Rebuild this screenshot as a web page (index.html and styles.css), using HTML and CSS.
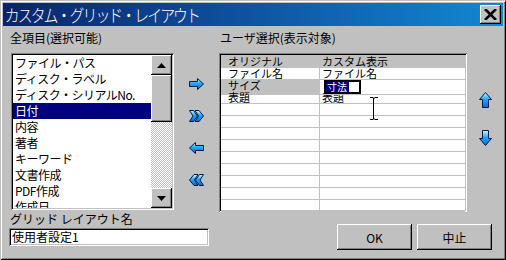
FILE: index.html
```html
<!DOCTYPE html>
<html>
<head>
<meta charset="utf-8">
<title>カスタム・グリッド・レイアウト</title>
<link rel="stylesheet" href="styles.css">
</head>
<body>
<div class="dialog">
  <div class="titlebar">
    <span class="title">カスタム・グリッド・レイアウト</span>
    <span class="close">
      <svg width="13" height="11" viewBox="0 0 13 11"><path d="M1 0 L12 11 M12 0 L1 11" stroke="#000" stroke-width="2.6"/></svg>
    </span>
  </div>

  <div class="body">
    <div class="left">
      <div class="label">全項目(選択可能)</div>
      <div class="pick">
        <div class="listbox">
          <ul class="items">
            <li>ファイル・パス</li>
            <li>ディスク・ラベル</li>
            <li>ディスク・シリアルNo.</li>
            <li class="selected">日付</li>
            <li>内容</li>
            <li>著者</li>
            <li>キーワード</li>
            <li>文書作成</li>
            <li>PDF作成</li>
            <li>作成日</li>
          </ul>
          <div class="scrollbar">
            <div class="sb-btn"><svg width="9" height="5" viewBox="0 0 9 5"><path d="M4.5 0 L9 5 H0 Z" fill="#000"/></svg></div>
            <div class="thumb"></div>
            <div class="track"></div>
            <div class="sb-btn"><svg width="9" height="5" viewBox="0 0 9 5"><path d="M0 0 H9 L4.5 5 Z" fill="#000"/></svg></div>
          </div>
        </div>
        <div class="movers">
          <svg class="arrow" width="15" height="12" viewBox="0 0 15 12"><defs><linearGradient id="ga" x1="0" y1="0" x2="0" y2="1"><stop offset="0" stop-color="#c8ffff"/><stop offset="0.45" stop-color="#22a6f6"/><stop offset="1" stop-color="#0a6ad0"/></linearGradient></defs><path d="M0.5 3.5 H8.5 V0.5 L14.5 6 L8.5 11.5 V8.5 H0.5 Z" fill="url(#ga)" stroke="#001a50"/></svg>
          <svg class="arrow" width="15" height="12" viewBox="0 0 15 12"><path d="M0.5 0.5 H4.5 L8.5 6 L4.5 11.5 H0.5 L4 6 Z M6 0.5 H10 L14.5 6 L10 11.5 H6 L9.5 6 Z" fill="url(#ga)" stroke="#001a50"/></svg>
          <svg class="arrow" width="15" height="12" viewBox="0 0 15 12"><path d="M14.5 3.5 H6.5 V0.5 L0.5 6 L6.5 11.5 V8.5 H14.5 Z" fill="url(#ga)" stroke="#001a50"/></svg>
          <svg class="arrow" width="15" height="12" viewBox="0 0 15 12"><path d="M14.5 0.5 H10.5 L6.5 6 L10.5 11.5 H14.5 L11 6 Z M9 0.5 H5 L0.5 6 L5 11.5 H9 L5.5 6 Z" fill="url(#ga)" stroke="#001a50"/></svg>
        </div>
      </div>
      <div class="label name-label">グリッド レイアウト名</div>
      <div class="field">使用者設定1</div>
    </div>

    <div class="right">
      <div class="label">ユーザ選択(表示対象)</div>
      <div class="pick">
        <div class="grid">
          <div class="row head"><div class="cell">オリジナル</div><div class="cell">カスタム表示</div></div>
          <div class="row"><div class="cell">ファイル名</div><div class="cell">ファイル名</div></div>
          <div class="row"><div class="cell current">サイズ</div><div class="cell editing"><span class="editor"><span class="sel">寸法</span></span></div></div>
          <div class="row"><div class="cell">表題</div><div class="cell">表題</div></div>
          <div class="row"><div class="cell"></div><div class="cell"></div></div>
          <div class="row"><div class="cell"></div><div class="cell"></div></div>
          <div class="row"><div class="cell"></div><div class="cell"></div></div>
          <div class="row"><div class="cell"></div><div class="cell"></div></div>
          <div class="row"><div class="cell"></div><div class="cell"></div></div>
          <div class="row"><div class="cell"></div><div class="cell"></div></div>
          <div class="row"><div class="cell"></div><div class="cell"></div></div>
          <div class="row"><div class="cell"></div><div class="cell"></div></div>
          <div class="row"><div class="cell"></div><div class="cell"></div></div>
          <svg class="ibeam" width="8" height="23" viewBox="0 0 8 23"><path d="M0 0.5 H3 M5 0.5 H8 M3.5 1 V22 M0 22.5 H3 M5 22.5 H8 M3 1 H5 M3 22 H5" stroke="#000" stroke-width="1"/></svg>
        </div>
        <div class="order">
          <svg class="arrow-v" width="13" height="16" viewBox="0 0 13 16"><path d="M6.5 0.5 L12.5 7.5 H9.5 V15.5 H3.5 V7.5 H0.5 Z" fill="url(#ga)" stroke="#001a50"/></svg>
          <svg class="arrow-v" width="13" height="16" viewBox="0 0 13 16"><path d="M6.5 15.5 L12.5 8.5 H9.5 V0.5 H3.5 V8.5 H0.5 Z" fill="url(#ga)" stroke="#001a50"/></svg>
        </div>
      </div>
      <div class="actions">
        <button class="btn">OK</button>
        <button class="btn">中止</button>
      </div>
    </div>
  </div>
</div>
</body>
</html>
```

FILE: styles.css
```css
body{margin:0; background:#c0c0c0; font-family:"Noto Sans CJK JP","Liberation Sans",sans-serif; font-size:12px; color:#000;}

.dialog{width:506px; height:260px; box-sizing:border-box; padding:3px; background:#c0c0c0;
  box-shadow:inset 1px 1px #c0c0c0, inset -1px -1px #000, inset 2px 2px #fff, inset -2px -2px #808080;}

.titlebar{height:23px; display:flex; align-items:center; justify-content:space-between;
  background:linear-gradient(to right,#0a246a 0%,#0e4f9c 45%,#1288d4 100%);}
.title{color:#fff; font-size:17px; letter-spacing:-2.2px; padding-left:2px; line-height:23px; font-weight:300;
  display:inline-block; transform:scaleX(0.875); transform-origin:left center;}
.close{width:21px; height:19px; margin-right:2px; box-sizing:border-box; background:#c0c0c0;
  display:flex; align-items:center; justify-content:center;
  box-shadow:inset -1px -1px #000, inset 1px 1px #fff, inset -2px -2px #808080;}

.body{display:flex; padding:5px 0 0 6px;}
.label{line-height:14px; height:14px; padding-left:1px; margin-bottom:8px; white-space:nowrap;}

/* left side */
.left{width:200px;}
.pick{display:flex;}
.listbox{width:163px; height:157px; margin-left:2px; box-sizing:border-box; padding:2px; background:#fff; display:flex;
  box-shadow:inset 1px 1px #808080, inset -1px -1px #fff, inset 2px 2px #000, inset -2px -2px #c0c0c0;}
.items{list-style:none; margin:0; padding:0; flex:1; overflow:hidden;}
.items li{height:16px; line-height:16px; padding-left:2px; white-space:nowrap; letter-spacing:-0.5px;}
.items li.selected{background:#000080; color:#fff;}
.scrollbar{width:21px; display:flex; flex-direction:column;}
.sb-btn,.thumb{background:#c0c0c0; box-sizing:border-box;
  box-shadow:inset -1px -1px #000, inset 1px 1px #fff, inset -2px -2px #808080;}
.sb-btn{height:20px; display:flex; align-items:center; justify-content:center;}
.thumb{height:47px;}
.track{flex:1; background:conic-gradient(#fff 25%,#c0c0c0 0 50%,#fff 0 75%,#c0c0c0 0) 0 0/2px 2px;}

.movers{display:flex; flex-direction:column; gap:20px; padding:25px 0 0 15px;}
.arrow{display:block;}

.name-label{margin:2px 0 2px;}
.field{width:200px; height:18px; box-sizing:border-box; padding:2px 0 0 3px; line-height:14px; background:#fff;
  box-shadow:inset 1px 1px #808080, inset -1px -1px #fff, inset 2px 2px #000, inset -2px -2px #c0c0c0;}

/* right side */
.right{margin-left:10px; width:273px;}
.grid{position:relative; width:248px; height:159px; box-sizing:border-box; padding:2px; background:#fff; overflow:hidden;
  box-shadow:inset 1px 1px #808080, inset -1px -1px #fff, inset 2px 2px #000, inset -2px -2px #c0c0c0;}
.row{display:grid; grid-template-columns:99px 1fr; height:12px; line-height:11px; font-size:11px;}
.row .cell{border-bottom:1px solid #c0c0c0; white-space:nowrap; overflow:hidden;}
.row .cell:first-child{padding-left:7px; border-right:1px solid #c0c0c0;}
.row .cell:last-child{padding-left:2px;}
.row.head{height:13px; background:#c0c0c0;}
.row.head .cell{border:0; line-height:13px;}
.row .cell.current{background:#c0c0c0; border-right-color:#c0c0c0;}
.row .cell.editing{overflow:visible; position:relative; z-index:1;}
.editor{display:inline-block; margin:0 0 0 2px; width:37px; height:14px; box-sizing:border-box; border:2px solid #000; background:#fff; vertical-align:top; position:relative; top:0;}
.sel{background:#000080; color:#fff; display:block; width:23px; height:10px; line-height:10px; font-size:10px; padding-left:1px; box-sizing:border-box;}
.ibeam{position:absolute; left:151px; top:44px;}

.order{display:flex; flex-direction:column; gap:22px; padding:39px 0 0 12px;}
.arrow-v{display:block;}

.actions{display:flex; justify-content:flex-end; gap:5px; margin-top:12px;}
.btn{width:75px; height:26px; border:0; padding:0; background:#c0c0c0; font:inherit; color:#000;
  box-shadow:inset -1px -1px #000, inset 1px 1px #fff, inset -2px -2px #808080;}
```
